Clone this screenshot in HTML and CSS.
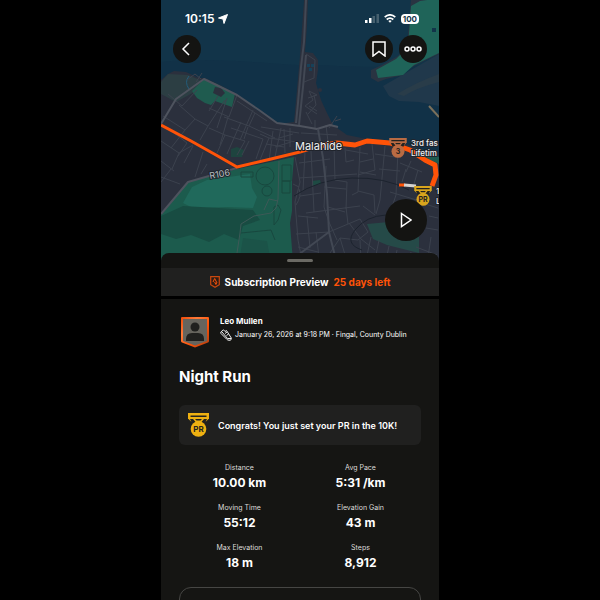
FILE: index.html
```html
<!DOCTYPE html>
<html lang="en">
<head>
    <meta charset="UTF-8">
    <meta name="viewport" content="width=device-width, initial-scale=1.0">
    <title>Night Run</title>
    <link rel="stylesheet" href="styles.css">
</head>
<body>
    <main class="phone">
        <section class="map">
            <svg class="map-canvas" viewBox="0 0 278 262" preserveAspectRatio="xMidYMin slice" role="img" aria-label="Run map around Malahide">
                <defs>
                    <symbol id="medal" viewBox="0 0 21 24">
                        <path d="M0 0h21v5.500l-3.500 3.500h-14l-3.500-3.500z" fill="currentColor"/>
                        <path d="M2.500 2.500h16v1.500h-16zM2 6h3l3 3.500-4 1zM19 6h-3l-3 3.500 4 1zM7 6h7l-1.500 1.500h-4z" fill="#23221f"/>
                        <circle cx="10.500" cy="16" r="7.800" fill="currentColor"/>
                    </symbol>
                </defs>
                <rect width="278" height="262" fill="#123449"/>
                <path d="M0 62C60 56 120 66 145 65S200 70 278 64V262H0z" fill="#113147"/>
                <!-- estuary on the north east -->
                <path d="M222 86l14-8 42-24v52l-20-4-20-1-10-5z" fill="#20384b"/>
                <path d="M236 94q20-12 42-20v8q-23 6-35 14z" fill="#293c49"/>
                <path d="M250 0h28v54l-17 8-14 7-5 6-17 4-8 3-7-4v-8l11-5 16-9 9-10z" fill="#293442"/>
                <path d="M250 6l9-5 7-1h12v53l-25 12-11 10-25 3-2-8 20-11 12-12z" fill="#1f6459"/>
                <path d="M271 28h4v4h-4z" fill="#123449"/>
                <path d="M268 106l10 11" stroke="#7b705b" stroke-width="2"/>
                <!-- land -->
                <path d="M143 0h4l-1 26-2 26 8 1 5 7v10l-2 13 5 17 6 13 6 12 14 10 20 4 21 2 15 2 18 6 18 8v106H0V80l7-6 6-3 12 1 13 6h6l17 8 16 9 16 13 24 16 16-2 3-33 3-33z" fill="#2b303d"/>
                <circle cx="159" cy="90" r="2" fill="#2b303d"/>
                <path d="M0 82l7-8 20 1 12 5-2 10-22 12-15-8z" fill="#2c3e43"/>
                <path d="M28 76q-5 6 0 13" stroke="#235c7a" fill="none"/>
                <path d="M31 91l12-12 13 5 18 10-3 13-17-6-4 4-6-2-8-5z" fill="#1f5b4f"/>
                <path d="M54 87l6 1 4 5-4 4-8-4z" fill="#2b303d"/>
                <path d="M146 64h3v3h-3zM150 64h3v3h-3zM148 68h3v3h-3z" fill="#174159"/>
                <path d="M70 149l6-2 7 3-2 7h-11z" fill="#1e443f"/>
                <path d="M151 181l8-1 1 4-9 2z" fill="#1e4a43"/>
                <path d="M206 224l22-2 12 5 18 10v16l-32-8-14-6z" fill="#254a48"/>
                <path d="M253 148l10 2 15 7v7l-9-4z" fill="#1d5b50"/>
                <!-- park -->
                <path d="M0 215l27-33 49-13 57-12-2 24 0 30-2 12 3 39H0z" fill="#1c5b4d"/>
                <path d="M31 187l15-7 43-6 2 14 5 9-4 11-26-1-34 1-10-5z" fill="#20695b"/>
                <path d="M0 216l22-10 35 2 35 2 7 10-17 6-4 14-15-6-15 8-18-7-15 4-15-5z" fill="#184c42"/>
                <path d="M82 238l24 3 4 21H78z" fill="#1b5348"/>
                <g fill="none" stroke="#18483f" stroke-width="1">
                    <circle cx="104" cy="176" r="9"/>
                    <circle cx="106" cy="191" r="5"/>
                    <path d="M80 172h12v5h-12zM121 165h9v16h-9zM121 181h8v12h-8zM113 207l4-2 3 5-3 10-4 5zM80 233l30-3 4 10"/>
                </g>
                <path d="M118 161l-1 38-2 9-5 5-17 3-13 8-1 9-3 20M103 210l5-11 9 2" fill="none" stroke="#3d5957"/>
                <!-- side streets -->
                <g class="streets">
                    <path d="M7 94l14 12 15-16M2 116l22 14 10-11-16-14M24 130l-14 18M34 119l13 7 17-26M47 126l-8 14M57 96l-9 15M56 128l10-30M48 108l20 9 8-22M67 117l-8 28M76 101l18 12-6 13-25-9M94 113l12 8M80 122l-14 32M88 126l26 12M92 110l-13 30"/>
                    <path d="M26 80l8-6 6 5M35 82l6-9M0 141l18 12-7 16M18 153l14-8M13 133l13 10-9 13M32 146l-9 17M42 152l-8 25M46 164l-6 10M0 161l13 10M0 177l19 7M10 169l-10 13M48 128l16 7-8 18M64 135l20 6-8 14M70 128l32 11-7 20M83 139l4-12M88 141l-7 14M99 134l9 4-9 22M105 144l18 3M108 138l28 4M112 131l-4 30M120 128l-6 29M114 147l16-5M118 138l14-4M123 129l1 24M129 128v19M100 127l38 6"/>
                    <path d="M145 54l9 6-1 18-10 4M147 98l9-3-8-4 4 9-8 6 12 8M153 95l2 10-8 9M145 112l6 12M148 106l8 5M154 120v8M168 128l8-12M174 121l6-2"/>
                    <path d="M165 125l3 25M140 133l36 2M138 163l31-4M138 178l58-4M144 152l-2 39M150 151l3 61M165 166l-2 41 5 15M173 146l1 34 12 2-1 27M184 148l1 14 8-2M199 147l-2 45-6 3M211 144l3 26-17 5M224 146l-5 54-4 14M237 150l-2 45-5 15M145 213l54-7M139 196l21-3M163 187l22 2M185 207l2 17M197 191l16 4 1 18M199 172l16 3M214 154l20 3M218 169l21 2M239 163l22 9M245 169l-4 13M257 170l-4 14M250 161l-5 11M229 192l30 9M167 207l17 5M185 150l22 4M199 162l13-3M202 206l12 9"/>
                    <path d="M137 216l20 2M146 216l3 32M135 234l33-2M155 232l3 25M168 232l31-13 8 13-10 8-18-2-12 18M188 223l12 16 14 11M199 240l1 20M179 238l6 20M210 237l-5 23M218 240l-4 20M228 246l-3 14M236 250l-2 10M250 252l-2 8M168 222l8 18M137 247l20 5"/>
                    <path d="M134 157l5 25-5 20 3 38 4 20M132 184l6 3M135 205q6-9 3-16M264 204l13 4M268 216l9 2M265 228l12 2M270 237l-3 20M255 247l21 8"/>
                </g>
                <path d="M133 196q25-17 58-18t57 12M260 228q-15-14-35-13t-31 15 7 20" fill="none" stroke="#1c232e"/>
                <!-- main roads -->
                <g class="roads">
                    <path d="M0 124l15-25 28-20 33 16 22 15 18 13 23 3 17 3 13-4 8 2"/>
                    <path d="M0 214l27-32 49-14"/>
                    <path class="minor" d="M145 0l-2 42-3 25-3 36-2 20M145 55l-3 32-4 38"/>
                    <path class="minor" d="M157 129l5 29 4 36 2 38-31 23M168 232l7 28"/>
                </g>
                <!-- run route -->
                <path class="route" d="M0 125l30 16 25 14 21 12 34-8 29-7 20-6"/>
                <path class="route wide" d="M158 146l18-3 18 2 12-4 23 2 20 7 15 10 10 5 1 10-4 11"/>
                <path d="M238 185h6" stroke="#ff5308" stroke-width="3"/>
                <path d="M243 185l12 1" stroke="#d5d3d0" stroke-width="3"/>
                <text class="map-label road" x="49" y="179" transform="rotate(-10 49 179)">R106</text>
                <text class="map-label town" x="134" y="150">Malahide</text>
                <svg x="228" y="138" width="18" height="20" color="#b96b43"><use href="#medal"/></svg>
                <text class="medal-text" x="237" y="154">3</text>
                <text class="map-label" x="250" y="146">3rd fas</text>
                <text class="map-label" x="250" y="156">Lifetim</text>
                <svg x="253" y="186" width="18" height="20" color="#d9a51d"><use href="#medal"/></svg>
                <text class="medal-text" x="262" y="202">PR</text>
                <text class="map-label" x="275" y="194">1</text>
                <text class="map-label" x="275" y="204">L</text>
            </svg>

            <div class="status-bar">
                <div class="clock">
                    <span>10:15</span>
                    <svg width="10" height="10" viewBox="0 0 10 10"><path d="M9.500.5L6 9.500 5 5 .5 4z" fill="#fff" stroke="#fff" stroke-linejoin="round"/></svg>
                </div>
                <div class="signals">
                    <svg width="14" height="9" viewBox="0 0 14 9"><path d="M0 6h2.500v3H0zM4 4h2.500v5H4z" fill="#fff"/><path d="M7.500 2H10v7H7.500zM11.500 0H14v9h-2.500z" fill="#46606f"/></svg>
                    <svg width="12" height="9" viewBox="0 0 12 9" fill="none" stroke="#fff" stroke-width="1.700"><path d="M.7 3.200Q6-1.500 11.300 3.200M2.700 5.500Q6 2.600 9.300 5.500"/><path d="M4.300 7Q6 5.600 7.700 7L6 8.800z" fill="#fff" stroke="none"/></svg>
                    <span class="battery">100</span>
                </div>
            </div>

            <div class="map-actions">
                <button class="round-btn back" aria-label="Back">
                    <svg width="14" height="14" viewBox="0 0 14 14"><path d="M9 1L3 7l6 6"/></svg>
                </button>
                <button class="round-btn" aria-label="Save">
                    <svg width="14" height="16" viewBox="0 0 14 16"><path d="M1 1h12v14L7 10.500 1 15z"/></svg>
                </button>
                <button class="round-btn" aria-label="More">
                    <svg width="18" height="6" viewBox="0 0 18 6"><circle cx="3" cy="3" r="2"/><circle cx="9" cy="3" r="2"/><circle cx="15" cy="3" r="2"/></svg>
                </button>
            </div>
            <button class="round-btn play" aria-label="Play flyover">
                <svg width="12" height="16" viewBox="0 0 12 16"><path d="M1.500 1.500L11 8l-9.500 6.500z"/></svg>
            </button>
        </section>

        <section class="sheet">
            <div class="handle"></div>
            <a class="banner" href="#">
                <svg width="10" height="12" viewBox="0 0 10 12"><path d="M.7.7h8.600v8L5 11.300.7 8.700z" fill="#2b1c15" stroke="#c9480f" stroke-width="1.200"/><path d="M3 6l1.700-3.500L6.500 6M4.700 6l1.200 2.500L7 6" fill="none" stroke="#ff5308"/></svg>
                <span>Subscription Preview</span>
                <span class="days-left">25 days left</span>
            </a>

            <div class="activity">
                <div class="athlete">
                    <svg class="avatar" width="30" height="32" viewBox="0 0 30 32">
                        <defs><linearGradient id="rim" x2="1" y2="1"><stop offset="0" stop-color="#f04a08"/><stop offset=".3" stop-color="#ff7a38"/><stop offset=".6" stop-color="#ff5308"/><stop offset="1" stop-color="#a83c12"/></linearGradient></defs>
                        <path d="M2 1h26q1 0 1 1v23q0 1-1 1.500L15 31.500 2 26.500q-1-.5-1-1.500V2q0-1 1-1z" fill="url(#rim)"/>
                        <path d="M3 3h24v22l-12 4.500L3 25z" fill="#66645d"/>
                        <circle cx="15" cy="11" r="4.500" fill="#20201e"/>
                        <path d="M6 25v-2q0-6 6-6h6q6 0 6 6v2z" fill="#20201e"/>
                    </svg>
                    <div class="athlete-info">
                        <h2>Leo Mullen</h2>
                        <p>
                            <svg width="12" height="12" viewBox="0 0 12 12" fill="none" stroke="#eee"><path d="M.8 3L3.500.8 5 2.500 6.500 1.500 10 7l1.300 2q.3 2-1.300 2.300-2.500.2-3.500-1.300L1 4.500z"/><path d="M2 3l5.500 6.500H11M5 4.500l2-1.500M6.500 6.500l2-1.500"/></svg>
                            <span>January 26, 2026 at 9:18 PM · Fingal, County Dublin</span>
                        </p>
                    </div>
                </div>

                <h1>Night Run</h1>

                <div class="congrats">
                    <div class="medal">
                        <svg width="21" height="24"><use href="#medal"/></svg>
                        <span>PR</span>
                    </div>
                    <p>Congrats! You just set your PR in the 10K!</p>
                </div>

                <dl class="stats">
                    <div><dt>Distance</dt><dd>10.00 km</dd></div>
                    <div><dt>Avg Pace</dt><dd>5:31 /km</dd></div>
                    <div><dt>Moving Time</dt><dd>55:12</dd></div>
                    <div><dt>Elevation Gain</dt><dd>43 m</dd></div>
                    <div><dt>Max Elevation</dt><dd>18 m</dd></div>
                    <div><dt>Steps</dt><dd>8,912</dd></div>
                </dl>

                <div class="next-card"></div>
            </div>
        </section>
    </main>
</body>
</html>
```
FILE: styles.css
```css
* {
    box-sizing: border-box;
}
body {
    margin: 0;
    background-color: #000;
    color: #fff;
    font-family: Inter, "Liberation Sans", sans-serif;
}
h1, h2, p, dl, dd {
    margin: 0;
}
.phone {
    display: flex;
    flex-direction: column;
    width: 100%;
    max-width: 278px;
    height: 100vh;
    margin: 0 auto;
    overflow: hidden;
    background-color: #151513;
}

/* map */
.map {
    position: relative;
    flex: none;
    height: 262px;
    padding-top: 11px;
    overflow: hidden;
}
.map-canvas {
    position: absolute;
    top: 0;
    left: 0;
    width: 100%;
    height: 100%;
}
.streets {
    fill: none;
    stroke: #3c424e;
    stroke-width: 1;
}
.roads {
    fill: none;
    stroke: #4e535e;
    stroke-width: 2;
    stroke-linejoin: round;
}
.minor {
    stroke: #424854;
}
.route {
    fill: none;
    stroke: #ff5308;
    stroke-width: 3;
    stroke-linejoin: round;
}
.wide {
    stroke-width: 5;
}
.map-label {
    fill: #f2f2f2;
    stroke: #20242c;
    stroke-width: 2px;
    paint-order: stroke;
    font-size: 8px;
    font-weight: 500;
}
.road {
    fill: #b9bfc2;
    font-size: 9px;
    font-weight: 400;
}
.town {
    font-size: 11px;
    font-weight: 400;
}
.medal-text {
    fill: #23221f;
    font-size: 7px;
    font-weight: 700;
    text-anchor: middle;
}
.status-bar {
    position: relative;
    display: flex;
    justify-content: space-between;
    align-items: center;
    height: 15px;
    padding: 0 20px 0 24px;
}
.clock, .signals {
    display: flex;
    align-items: center;
    gap: 4px;
}
.clock {
    font-size: 12px;
    font-weight: 600;
}
.signals {
    gap: 5px;
}
.battery {
    padding: 0 2px;
    border-radius: 4px;
    background-color: #fff;
    color: #123449;
    font-size: 8px;
    font-weight: 700;
    line-height: 10px;
}
.map-actions {
    position: relative;
    display: flex;
    gap: 6px;
    padding: 9px 12px 0;
}
.round-btn {
    display: flex;
    justify-content: center;
    align-items: center;
    width: 28px;
    height: 28px;
    padding: 0;
    border: none;
    border-radius: 50%;
    background-color: #141412;
    cursor: pointer;
}
.round-btn svg {
    fill: none;
    stroke: #fff;
    stroke-width: 1.5;
}
.back {
    margin-right: auto;
}
.play {
    position: absolute;
    right: 12px;
    bottom: 21px;
    width: 42px;
    height: 42px;
}

/* bottom sheet */
.sheet {
    position: relative;
    flex: 1;
    margin-top: -9px;
    border-radius: 8px 8px 0 0;
    background-color: #151513;
}
.handle {
    width: 26px;
    height: 3px;
    margin: 6px auto;
    border-radius: 2px;
    background-color: #6b6a64;
}
.banner {
    display: flex;
    justify-content: center;
    align-items: center;
    gap: 5px;
    height: 31px;
    border-bottom: 3px solid #000;
    background-color: #20201f;
    color: #fff;
    font-size: 10px;
    font-weight: 700;
    text-decoration: none;
}
.days-left {
    color: #ff5308;
}
.activity {
    padding: 17px 18px 0;
}
.athlete {
    display: flex;
    gap: 10px;
    padding-left: 1px;
}
.athlete-info h2 {
    font-size: 8px;
    line-height: 10px;
}
.athlete-info p {
    display: flex;
    align-items: center;
    gap: 3px;
    margin-top: 3px;
    font-size: 7px;
    line-height: 12px;
}
h1 {
    margin-top: 19px;
    font-size: 15px;
    line-height: 20px;
}
.congrats {
    display: flex;
    align-items: center;
    gap: 9px;
    height: 40px;
    margin-top: 18px;
    padding: 0 9px;
    border-radius: 6px;
    background-color: #20201f;
    font-size: 9px;
    font-weight: 600;
}
.medal {
    position: relative;
    height: 24px;
    color: #eeb011;
}
.medal span {
    position: absolute;
    left: 0;
    bottom: 3px;
    width: 100%;
    color: #23221f;
    font-size: 8px;
    font-weight: 700;
    line-height: 9px;
    text-align: center;
}
.stats {
    display: grid;
    grid-template-columns: 1fr 1fr;
    gap: 12px 0;
    margin-top: 17px;
    text-align: center;
}
.stats dt {
    color: #deddda;
    font-size: 7px;
    line-height: 12px;
}
.stats dd {
    margin-top: 1px;
    font-size: 12px;
    font-weight: 700;
    line-height: 15px;
}
.next-card {
    height: 80px;
    margin-top: 17px;
    border: 1px solid #464644;
    border-radius: 12px;
}
```
